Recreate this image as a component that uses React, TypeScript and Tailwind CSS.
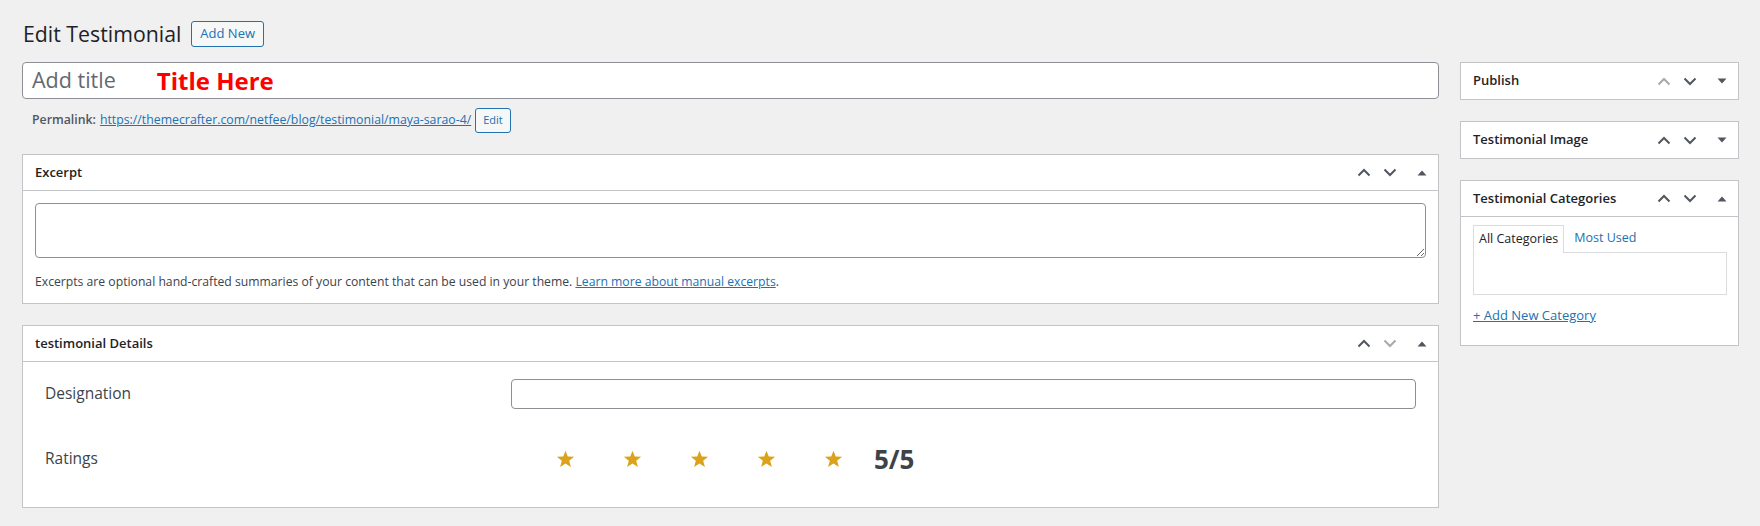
import React from 'react'

function Chevron({ dir, muted }: { dir: 'up' | 'down'; muted?: boolean }) {
  return (
    <svg width="14" height="9" viewBox="0 0 14 9" className={muted ? 'text-[#a7aaad]' : 'text-[#50575e]'}>
      <path
        d={dir === 'up' ? 'M1.5 7.5 L7 2 L12.5 7.5' : 'M1.5 1.5 L7 7 L12.5 1.5'}
        fill="none"
        stroke="currentColor"
        strokeWidth="2"
      />
    </svg>
  )
}

function Toggle({ open }: { open: boolean }) {
  return (
    <svg width="10" height="6" viewBox="0 0 10 6" className="text-[#50575e]">
      <path d={open ? 'M0.5 5.5 L5 0.5 L9.5 5.5 Z' : 'M0.5 0.5 L9.5 0.5 L5 5.5 Z'} fill="currentColor" />
    </svg>
  )
}

function Postbox({
  title,
  open = true,
  upMuted,
  downMuted,
  children,
}: {
  title: string
  open?: boolean
  upMuted?: boolean
  downMuted?: boolean
  children?: React.ReactNode
}) {
  return (
    <div className="border border-[#c3c4c7] bg-white">
      <div
        className={
          'flex h-[36px] items-center justify-between pl-[12px] pr-[3px] ' +
          (open ? 'border-b border-[#c3c4c7]' : '')
        }
      >
        <h2 className="text-[13px] font-semibold text-[#1d2327]">{title}</h2>
        <div className="flex items-center">
          <button className="flex h-[36px] w-[26px] items-center justify-center">
            <Chevron dir="up" muted={upMuted} />
          </button>
          <button className="flex h-[36px] w-[26px] items-center justify-center">
            <Chevron dir="down" muted={downMuted} />
          </button>
          <button className="ml-[6px] flex h-[36px] w-[26px] items-center justify-center">
            <Toggle open={open} />
          </button>
        </div>
      </div>
      {open && children}
    </div>
  )
}

function Star() {
  return (
    <svg width="19" height="18" viewBox="0 0 24 23" className="text-[#dba21b]">
      <path
        d="M12 0.8 L14.9 8.3 L23 8.6 L16.7 13.7 L18.9 21.6 L12 17.1 L5.1 21.6 L7.3 13.7 L1 8.6 L9.1 8.3 Z"
        fill="currentColor"
      />
    </svg>
  )
}

export default function App() {
  return (
    <div className="min-h-screen bg-[#f0f0f1] pl-[22px] pr-[21px] pt-[21px] font-['Open_Sans',sans-serif] text-[13px] text-[#3c434a]">
      {/* Page heading */}
      <div className="flex h-[26px] items-center">
        <h1 className="pl-px text-[21.3px] font-normal text-[#1d2327]">Edit Testimonial</h1>
        <button className="ml-[10px] h-[26px] rounded-[3px] border border-[#2271b1] bg-[#f6f7f7] px-[8px] text-[13px] text-[#2271b1]">
          Add New
        </button>
      </div>

      <div className="mt-[15px] flex gap-[21px]">
        {/* Main column */}
        <div className="flex-1">
          <div className="flex h-[37px] items-center rounded-[4px] border border-[#8c8f94] bg-white pl-[9px]">
            <span className="text-[21.5px] text-[#646970]">Add title</span>
            <span className="ml-[41px] text-[24px] font-bold text-[#ff0000]">Title Here</span>
          </div>

          <div className="mt-[9px] flex h-[25px] items-center pl-[10px] text-[12.3px]">
            <strong className="font-semibold text-[#50575e]">Permalink:</strong>
            <a href="#" className="ml-[4px] text-[#2271b1] underline">
              https://themecrafter.com/netfee/blog/testimonial/maya-sarao-4/
            </a>
            <button className="ml-[4px] h-[25px] rounded-[3px] border border-[#2271b1] bg-[#f6f7f7] px-[7px] text-[11px] text-[#2271b1]">
              Edit
            </button>
          </div>

          <div className="mt-[21px]">
            <Postbox title="Excerpt">
              <div className="px-[12px] pb-[11px] pt-[12px]">
                <textarea
                  readOnly
                  className="block h-[55px] w-full resize-y rounded-[4px] border border-[#8c8f94] bg-white"
                />
                <p className="mt-[14px] text-[12.2px] leading-[20px]">
                  Excerpts are optional hand-crafted summaries of your content that can be used in your theme.{' '}
                  <a href="#" className="text-[#2271b1] underline">
                    Learn more about manual excerpts
                  </a>
                  .
                </p>
              </div>
            </Postbox>
          </div>

          <div className="mt-[21px]">
            <Postbox title="testimonial Details" downMuted>
              <div className="grid grid-cols-[466px_1fr] items-center gap-y-[35px] px-[22px] pb-[33px] pt-[17px]">
                <div className="text-[15.5px] font-medium text-[#3c434a]">Designation</div>
                <input
                  readOnly
                  className="h-[30px] w-full rounded-[4px] border border-[#8c8f94] bg-white"
                />
                <div className="text-[15.5px] font-medium text-[#3c434a]">Ratings</div>
                <div className="flex h-[30px] items-center pl-[45px]">
                  <div className="flex items-center gap-[48px]">
                    <Star />
                    <Star />
                    <Star />
                    <Star />
                    <Star />
                  </div>
                  <span className="ml-[31px] text-[26px] font-bold leading-none text-[#3c434a]">5/5</span>
                </div>
              </div>
            </Postbox>
          </div>
        </div>

        {/* Sidebar */}
        <div className="flex w-[279px] flex-col gap-[21px]">
          <Postbox title="Publish" open={false} upMuted />
          <Postbox title="Testimonial Image" open={false} />
          <Postbox title="Testimonial Categories">
            <div className="pb-[20px] pl-[12px] pr-[11px] pt-[8px]">
              <div className="flex items-end text-[12.5px]">
                <div className="relative z-10 -mb-px flex h-[28px] items-center border border-b-0 border-[#dcdcde] bg-white px-[5px] text-[#1d2327]">
                  All Categories
                </div>
                <a href="#" className="ml-[10px] flex h-[27px] items-center text-[#2271b1]">
                  Most Used
                </a>
              </div>
              <div className="h-[43px] border border-[#dcdcde] bg-white" />
              <a href="#" className="mt-[10px] block leading-[20px] text-[#2271b1] underline">
                + Add New Category
              </a>
            </div>
          </Postbox>
        </div>
      </div>
    </div>
  )
}
